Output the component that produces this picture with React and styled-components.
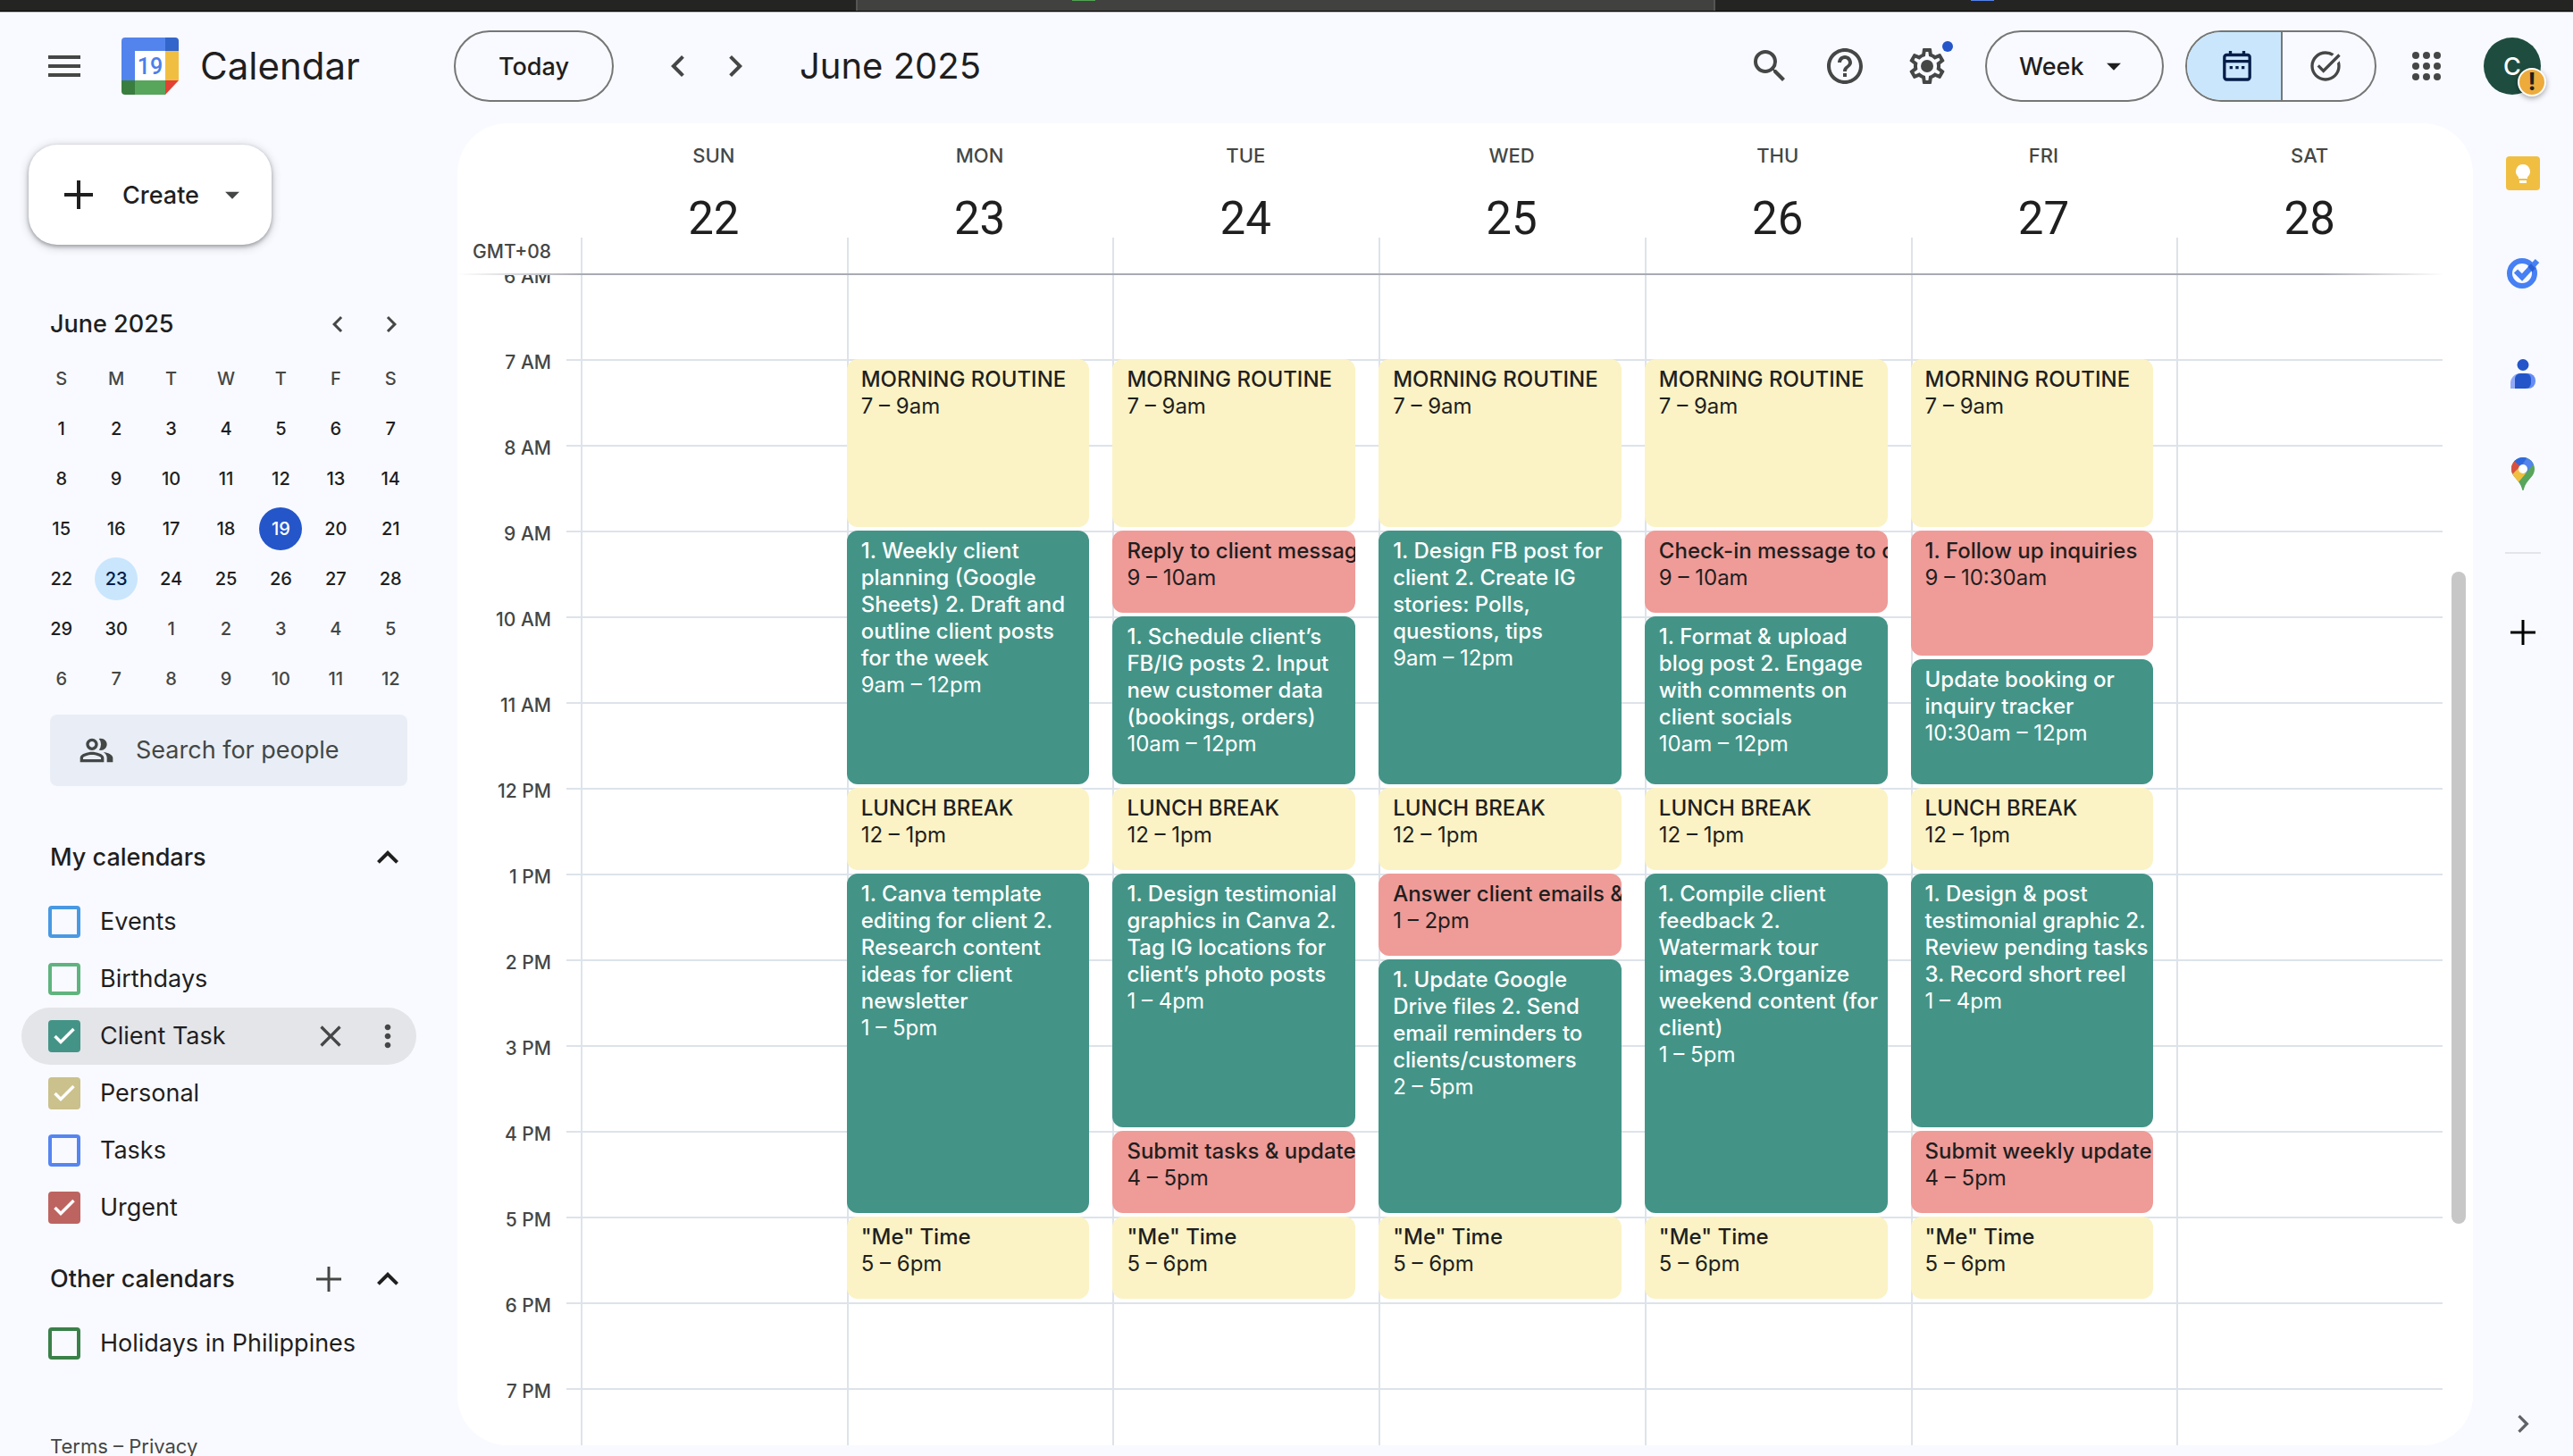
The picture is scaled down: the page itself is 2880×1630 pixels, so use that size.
import React from "react";
import styled, { createGlobalStyle } from "styled-components";
import {
  MdMenu,
  MdSearch,
  MdHelpOutline,
  MdTaskAlt,
  MdChevronLeft,
  MdChevronRight,
  MdClose,
  MdMoreVert,
  MdExpandLess,
  MdArrowDropDown,
  MdOutlinePeopleAlt,
} from "react-icons/md";

const color = {
  page: "#f9faff",
  card: "#ffffff",
  text: "#1f1f1f",
  muted: "#444746",
  outline: "#747775",
  line: "#dde3ea",
  accent: "#2456ca",
  tint: "#c9e6fd",
  tintText: "#041e49",
};

const HALF_HOUR = 48;
const FIRST_HOUR = 6;

const GlobalStyle = createGlobalStyle`
  *, *::before, *::after { box-sizing: border-box; }
  body {
    margin: 0;
    background: ${color.page};
    color: ${color.text};
    font-family: Inter, Roboto, "Liberation Sans", sans-serif;
  }
  button, input, select { font: inherit; color: inherit; margin: 0; }
  button { background: none; border: 0; padding: 0; cursor: pointer; }
  h1, h2, h3, p { margin: 0; font-weight: inherit; }
  svg { display: block; flex: none; }
`;

/* ---------- shell ---------- */

const Page = styled.div`
  height: 100vh;
  display: flex;
  flex-direction: column;
  overflow: hidden;
`;

const BrowserStrip = styled.div`
  flex: none;
  height: 14px;
  display: grid;
  grid-template-columns: 958fr 962fr 960fr;
  padding-bottom: 1px;
  background: #050505;
  border-bottom: 1px solid #b4b6ba;
`;

const BrowserTab = styled.div`
  padding-left: ${(p) => (p.$active ? "240px" : "286px")};
  background: ${(p) => (p.$active ? "#41413f" : "#242422")};
  border: solid #555553;
  border-width: ${(p) => (p.$active ? "0 2px" : "0")};
`;

const FaviconEdge = styled.div`
  width: 26px;
  height: 1px;
  background: ${(p) => p.$color};
`;

const Columns = styled.div`
  flex: 1;
  min-height: 0;
  display: grid;
  grid-template-columns: 512px minmax(0, 1fr) 112px;
`;

/* ---------- top bar ---------- */

const TopBar = styled.header`
  flex: none;
  display: flex;
  align-items: center;
  height: 124px;
  padding: 0 36px 4px 0;
`;

const Brand = styled.div`
  flex: 0 0 508px;
  display: flex;
  align-items: center;
  padding-left: 48px;
`;

const BrandLink = styled.a`
  display: flex;
  align-items: center;
  gap: 24px;
  margin-left: 40px;
  color: inherit;
  text-decoration: none;
  font-size: 42px;
  line-height: 52px;
`;

const IconButton = styled.button`
  display: flex;
  align-items: center;
  justify-content: center;
  width: ${(p) => p.$size || 48}px;
  height: ${(p) => p.$size || 48}px;
  margin-right: ${(p) => p.$after || 0}px;
  color: ${(p) => p.$color || color.muted};
`;

const TodayButton = styled.button`
  height: 80px;
  padding: 0 48px;
  border: 2px solid ${color.outline};
  border-radius: 40px;
  font-size: 27px;
  font-weight: 500;
`;

const Pager = styled.div`
  display: flex;
  margin: 0 40px;
`;

const PeriodTitle = styled.h1`
  flex: 1;
  font-size: 40px;
  line-height: 52px;
`;

const SettingsWrap = styled.div`
  position: relative;
  margin-right: 41px;
`;

const NoticeDot = styled.span`
  position: absolute;
  top: -4px;
  right: -5px;
  width: 12px;
  height: 12px;
  border-radius: 50%;
  background: ${color.accent};
`;

const ViewPicker = styled.label`
  display: grid;
  align-items: center;
  margin-right: 24px;
  > * { grid-area: 1 / 1; }
  > svg { justify-self: end; margin-right: 37px; pointer-events: none; }
`;

const ViewSelect = styled.select`
  appearance: none;
  width: 200px;
  height: 80px;
  padding: 0 36px;
  border: 2px solid ${color.outline};
  border-radius: 40px;
  background: transparent;
  font-size: 27px;
  font-weight: 500;
`;

const ModeSwitch = styled.div`
  display: flex;
  height: 80px;
  margin-right: 32px;
  border: 2px solid ${color.outline};
  border-radius: 40px;
  overflow: hidden;
`;

const ModeButton = styled.button`
  display: flex;
  align-items: center;
  justify-content: center;
  width: 105px;
  padding: ${(p) => (p.$active ? "0 0 0 6px" : "0 8px 0 0")};
  background: ${(p) => (p.$active ? color.tint : "transparent")};
  color: ${(p) => (p.$active ? color.tintText : color.muted)};
  & + & { border-left: 2px solid ${color.outline}; }
`;

const Account = styled.button`
  position: relative;
  width: 64px;
  height: 64px;
  border-radius: 50%;
  background: #1e4d40;
  color: #fff;
  font-size: 27px;
  font-weight: 500;
`;

const AccountAlert = styled.span`
  position: absolute;
  right: -6px;
  bottom: -2px;
  width: 32px;
  height: 32px;
  border: 2px solid #fff;
  border-radius: 50%;
  background: #edab3c;
  color: ${color.text};
  box-shadow: 0 2px 6px rgba(0, 0, 0, 0.35);
  font-size: 27px;
  font-weight: 700;
  line-height: 28px;
  text-align: center;
`;

/* ---------- sidebar ---------- */

const Sidebar = styled.aside`
  padding: 24px 46px 0 24px;
  overflow: hidden;
`;

const CreateButton = styled.button`
  display: flex;
  align-items: center;
  height: 112px;
  margin-left: 8px;
  padding: 0 25px 0 40px;
  border-radius: 32px;
  background: ${color.card};
  box-shadow: 0 2px 4px rgba(60, 64, 67, 0.4), 0 2px 10px 2px rgba(60, 64, 67, 0.2);
  font-size: 27px;
  font-weight: 500;
  > span { margin: 0 18px 0 33px; }
`;

const MiniCalendar = styled.section`
  margin-top: 64px;
  padding: 0 0 0 14px;
`;

const MiniHeader = styled.div`
  display: flex;
  align-items: center;
  height: 50px;
  padding-left: 18px;
`;

const MiniTitle = styled.h2`
  flex: 1;
  font-size: 27px;
  line-height: 36px;
  font-weight: 500;
`;

const MiniTable = styled.table`
  width: 430px;
  margin-top: 8px;
  table-layout: fixed;
  border-collapse: collapse;
  font-size: 20px;
  font-weight: 500;
  text-align: center;
  th, td { height: 56px; padding: 0; font-weight: 500; }
  th { color: ${color.muted}; }
`;

const MiniDay = styled.button`
  width: 48px;
  height: 48px;
  border-radius: 50%;
  background: ${(p) => (p.$today ? color.accent : p.$selected ? color.tint : "transparent")};
  color: ${(p) => (p.$today ? "#fff" : p.$selected ? color.tintText : p.$other ? color.muted : color.text)};
`;

const PeopleSearch = styled.label`
  display: flex;
  align-items: center;
  gap: 24px;
  height: 80px;
  margin: 12px 10px 0 32px;
  padding: 0 32px;
  border-radius: 8px;
  background: #e9eef6;
  color: ${color.muted};
`;

const PeopleInput = styled.input`
  flex: 1;
  min-width: 0;
  border: 0;
  padding: 0;
  outline: 0;
  background: none;
  font-size: 27px;
  line-height: 36px;
  &::placeholder { color: ${color.muted}; opacity: 1; }
`;

const ListHeader = styled.div`
  display: flex;
  align-items: center;
  height: 64px;
  margin-top: ${(p) => p.$before}px;
  margin-bottom: 8px;
  padding: 0 8px 0 32px;
`;

const ListTitle = styled.h3`
  flex: 1;
  font-size: 27px;
  line-height: 36px;
  font-weight: 500;
`;

const CalendarRow = styled.div`
  display: flex;
  align-items: center;
  height: 64px;
  padding: 0 12px 0 30px;
  border-radius: 32px;
  background: ${(p) => (p.$hovered ? "#e4e5e9" : "transparent")};
`;

const CalendarLabel = styled.label`
  flex: 1;
  display: flex;
  align-items: center;
  gap: 22px;
  font-size: 27px;
  line-height: 36px;
`;

const TickBox = styled.span`
  display: grid;
  place-items: center;
  color: #fff;
  > * { grid-area: 1 / 1; }
`;

const Tick = styled.input`
  appearance: none;
  width: 36px;
  height: 36px;
  border: 4px solid ${(p) => p.$color};
  border-radius: 4px;
  &:checked { background: ${(p) => p.$color}; }
`;

const Legal = styled.p`
  margin-top: 68px;
  padding-left: 32px;
  color: ${color.muted};
  font-size: 22px;
  line-height: 30px;
  a { color: inherit; text-decoration: none; }
`;

/* ---------- week view ---------- */

const WeekCard = styled.main`
  display: flex;
  flex-direction: column;
  margin-bottom: 12px;
  border-radius: 56px;
  background: ${color.card};
  overflow: hidden;
`;

const WeekHead = styled.div`
  flex: none;
  display: grid;
  grid-template-columns: 138px minmax(0, 1fr) 34px;
  height: 168px;
`;

const Zone = styled.div`
  align-self: end;
  padding: 0 33px 10px 0;
  color: ${color.muted};
  font-size: 21px;
  line-height: 28px;
  font-weight: 500;
  text-align: right;
`;

const SevenDays = styled.div`
  display: grid;
  grid-template-columns: repeat(7, minmax(0, 1fr));
`;

const DayHead = styled.div`
  display: grid;
  grid-template-rows: 72px 56px 40px;
  text-align: center;
  &::after {
    content: "";
    border-left: 2px solid ${color.line};
  }
`;

const DayName = styled.span`
  padding-top: 22px;
  color: ${color.muted};
  font-size: 22px;
  line-height: 28px;
  font-weight: 500;
`;

const DayNumber = styled.span`
  padding-top: 7px;
  font-family: Roboto, Inter, sans-serif;
  font-size: 51px;
  line-height: 56px;
`;

const HeadRule = styled.div`
  flex: none;
  position: relative;
  z-index: 1;
  height: 2px;
  margin: 0 32px 0 0;
  background: linear-gradient(90deg, transparent, #a9abb2 140px, #a9abb2 calc(100% - 140px), transparent);
`;

const WeekBody = styled.div`
  flex: 1;
  min-height: 0;
  display: grid;
  grid-template-columns: 138px minmax(0, 1fr) 34px;
  grid-template-rows: minmax(0, 1fr);
  overflow: hidden;
`;

const hourLines = `repeating-linear-gradient(
  transparent 0 94px,
  ${color.line} 94px 96px
)`;

const Gutter = styled.div`
  display: grid;
  grid-template-columns: minmax(0, 1fr) 16px;
`;

const HourTicks = styled.div`
  background: ${hourLines};
`;

const HourLabels = styled.div`
  margin-top: -12px;
`;

const HourLabel = styled.div`
  height: 96px;
  padding-right: 17px;
  color: ${color.muted};
  font-size: 21px;
  line-height: 28px;
  font-weight: 500;
  text-align: right;
`;

const DayColumn = styled.div`
  display: grid;
  grid-template-rows: repeat(27, ${HALF_HOUR}px);
  margin-top: -2px;
  border-left: 2px solid ${color.line};
  background: repeating-linear-gradient(${color.line} 0 2px, transparent 2px 96px);
`;

const palette = {
  personal: { background: "#fbf3c5", text: color.text },
  client: { background: "#439487", text: "#ffffff" },
  urgent: { background: "#ef9b98", text: color.text },
};

const EventCard = styled.button`
  grid-column: 1;
  grid-row: ${(p) => p.$row} / span ${(p) => p.$span};
  display: flex;
  flex-direction: column;
  justify-content: flex-start;
  min-width: 0;
  margin: 0 26px 4px -2px;
  padding: 8px 0 0 16px;
  border-radius: 12px;
  overflow: hidden;
  background: ${(p) => palette[p.$kind].background};
  color: ${(p) => palette[p.$kind].text};
  font-size: 24px;
  line-height: 30px;
  text-align: left;
`;

const EventTitle = styled.span`
  flex: none;
  font-weight: 500;
  white-space: ${(p) => (p.$oneLine ? "nowrap" : "pre-line")};
  overflow: ${(p) => (p.$oneLine ? "hidden" : "visible")};
`;

const ScrollRail = styled.div`
  display: grid;
  grid-template-rows: 332fr 730fr 248fr;
  justify-items: end;
  padding-right: 8px;
`;

const ScrollThumb = styled.div`
  grid-row: 2;
  width: 16px;
  border-radius: 8px;
  background: #c7c7c7;
`;

/* ---------- side panel ---------- */

const SidePanel = styled.nav`
  display: flex;
  flex-direction: column;
  align-items: center;
  gap: 72px;
  padding: 36px 0 16px;
`;

const PanelDivider = styled.hr`
  width: 40px;
  height: 2px;
  margin: -4px 0;
  border: 0;
  background: #e3e5ea;
`;

const PanelSpacer = styled.div`
  flex: 1;
`;

/* ---------- drawings ---------- */

const CalendarLogo = () => (
  <svg width="64" height="64" viewBox="0 0 64 64" aria-hidden="true">
    <path d="M0 4a4 4 0 0 1 4-4h45v15H15v33H0z" fill="#5383ec" />
    <path d="M49 0h11a4 4 0 0 1 4 4v11H49z" fill="#3266ca" />
    <path d="M49 15h15v33H49z" fill="#f0bf42" />
    <path d="M15 48h34v16H15z" fill="#58a55c" />
    <path d="M0 48h15v16H4a4 4 0 0 1-4-4z" fill="#397e3f" />
    <path d="M49 48h15L49 64z" fill="#e24133" />
    <path d="M15 15h34v33H15z" fill="#fff" />
    <text x="32" y="41" textAnchor="middle" fontFamily="Roboto, Inter, sans-serif" fontSize="25" fontWeight="500" fill="#4c7fe8">19</text>
  </svg>
);

const GearIcon = () => (
  <svg width="48" height="48" viewBox="0 0 24 24" fill="currentColor" aria-hidden="true">
    <path d="M19.43 12.98c.04-.32.07-.64.07-.98 0-.34-.03-.66-.07-.98l2.11-1.65c.19-.15.24-.42.12-.64l-2-3.46c-.09-.16-.26-.25-.44-.25-.06 0-.12.01-.17.03l-2.49 1c-.52-.4-1.08-.73-1.69-.98l-.38-2.65C14.46 2.18 14.25 2 14 2h-4c-.25 0-.46.18-.49.42l-.38 2.65c-.61.25-1.17.59-1.69.98l-2.49-1c-.06-.02-.12-.03-.18-.03-.17 0-.34.09-.43.25l-2 3.46c-.13.22-.07.49.12.64l2.11 1.65c-.04.32-.07.65-.07.98 0 .33.03.66.07.98l-2.11 1.65c-.19.15-.24.42-.12.64l2 3.46c.09.16.26.25.44.25.06 0 .12-.01.17-.03l2.49-1c.52.4 1.08.73 1.69.98l.38 2.65c.03.24.24.42.49.42h4c.25 0 .46-.18.49-.42l.38-2.65c.61-.25 1.17-.59 1.69-.98l2.49 1c.06.02.12.03.18.03.17 0 .34-.09.43-.25l2-3.46c.12-.22.07-.49-.12-.64l-2.11-1.65zm-1.98-1.71c.04.31.05.52.05.73 0 .21-.02.43-.05.73l-.14 1.13.89.7 1.08.84-.7 1.21-1.27-.51-1.04-.42-.9.68c-.43.32-.84.56-1.25.73l-1.06.43-.16 1.13-.2 1.35h-1.4l-.19-1.35-.16-1.13-1.06-.43c-.43-.18-.83-.41-1.23-.71l-.91-.7-1.06.43-1.27.51-.7-1.21 1.08-.84.89-.7-.14-1.13c-.03-.31-.05-.54-.05-.74s.02-.43.05-.73l.14-1.13-.89-.7-1.08-.84.7-1.21 1.27.51 1.04.42.9-.68c.43-.32.84-.56 1.25-.73l1.06-.43.16-1.13.2-1.35h1.39l.19 1.35.16 1.13 1.06.43c.43.18.83.41 1.23.71l.91.7 1.06-.43 1.27-.51.7 1.21-1.07.85-.89.7.14 1.13z" />
    <circle cx="12" cy="12" r="3.5" />
  </svg>
);

const AgendaIcon = () => (
  <svg width="40" height="40" viewBox="0 0 24 24" aria-hidden="true">
    <rect x="3.5" y="4.5" width="17" height="16.5" rx="1.5" fill="none" stroke="currentColor" strokeWidth="2" />
    <path d="M7.5 1.8v3M16.5 1.8v3M3.5 8.8h17" stroke="currentColor" strokeWidth="2" />
    <path d="M7 12h2v2H7zM11 12h2v2h-2zM15 12h2v2h-2z" fill="currentColor" />
  </svg>
);

const CheckIcon = () => (
  <svg width="24" height="20" viewBox="0 0 24 20" aria-hidden="true">
    <path d="M1.500 10l6.500 6.500L22.500 2" fill="none" stroke="currentColor" strokeWidth="3.500" />
  </svg>
);

const AppsIcon = () => (
  <svg width="48" height="48" viewBox="0 0 24 24" fill="currentColor" aria-hidden="true">
    {[6, 12, 18].map((y) => [6, 12, 18].map((x) => <circle key={`${x}-${y}`} cx={x} cy={y} r="2" />))}
  </svg>
);

const PlusIcon = ({ size, stroke }) => (
  <svg width={size} height={size} viewBox={`0 0 ${size} ${size}`} aria-hidden="true">
    <path d={`M${size / 2} 0v${size}M0 ${size / 2}h${size}`} stroke="currentColor" strokeWidth={stroke} />
  </svg>
);

const KeepIcon = () => (
  <svg width="38" height="38" viewBox="0 0 38 38" aria-hidden="true">
    <rect width="38" height="38" rx="4" fill="#f0bf42" />
    <path d="M19 9a8 8 0 0 0-5 14.2V25h10v-1.8A8 8 0 0 0 19 9z" fill="#fff" />
    <path d="M15 27h8v3h-8z" fill="#fff" />
  </svg>
);

const TasksIcon = () => (
  <svg width="38" height="36" viewBox="0 0 38 36" aria-hidden="true">
    <circle cx="18" cy="18" r="14" fill="none" stroke="#4680f4" strokeWidth="6" />
    <path d="M11 15.5l7 7L35 4" fill="none" stroke="#4680f4" strokeWidth="6" />
    <path d="M24.5 10.5L28 7l5 5.5-3.500 4z" fill="#2c62d6" />
  </svg>
);

const ContactsIcon = () => (
  <svg width="28" height="33" viewBox="0 0 28 33" aria-hidden="true">
    <circle cx="14" cy="6.5" r="6.5" fill="#2456ca" />
    <path d="M0 33v-6a11 11 0 0 1 11-11h3v17z" fill="#91aaf7" />
    <path d="M14 16h6a8 8 0 0 1 8 8v1a8 8 0 0 1-8 8h-6z" fill="#668cf6" />
    <path d="M12 16h5a6 6 0 0 1 6 6v5a6 6 0 0 1-6 6H5V22a6 6 0 0 1 6-6z" fill="#2456ca" />
  </svg>
);

const MapsIcon = () => (
  <svg width="26" height="37" viewBox="0 0 26 37" aria-hidden="true">
    <clipPath id="pin">
      <path d="M13 0C5.8 0 0 5.8 0 13c0 4 1.6 6.6 4 9.6 3.5 4.3 6.7 7.5 8 12.8.2.9.5 1.6 1 1.6s.8-.7 1-1.6c1.3-5.3 4.5-8.5 8-12.8 2.4-3 4-5.6 4-9.6C26 5.8 20.2 0 13 0z" />
    </clipPath>
    <g clipPath="url(#pin)">
      <path d="M0 0h26v37H0z" fill="#58a55c" />
      <path d="M0 20l9-11 8 8-10 12z" fill="#f0bf42" />
      <path d="M18 0h8v6L16 18l-7-7z" fill="#5383ec" />
      <path d="M0 0h18L10 11 3 5z" fill="#3069de" />
      <path d="M0 0l3 4 7 6-10 10z" fill="#d95040" />
    </g>
    <circle cx="13" cy="13" r="5" fill="#fff" />
  </svg>
);

/* ---------- data ---------- */

const weekdays = ["S", "M", "T", "W", "T", "F", "S"];

const miniWeeks = [
  [1, 2, 3, 4, 5, 6, 7],
  [8, 9, 10, 11, 12, 13, 14],
  [15, 16, 17, 18, 19, 20, 21],
  [22, 23, 24, 25, 26, 27, 28],
  [29, 30, 1, 2, 3, 4, 5],
  [6, 7, 8, 9, 10, 11, 12],
];

const myCalendars = [
  { name: "Events", color: "#4899e3" },
  { name: "Birthdays", color: "#5fb37e" },
  { name: "Client Task", color: "#439487", checked: true, hovered: true },
  { name: "Personal", color: "#cac18c", checked: true },
  { name: "Tasks", color: "#5585f0" },
  { name: "Urgent", color: "#bd6460", checked: true },
];

const otherCalendars = [{ name: "Holidays in Philippines", color: "#3a8049" }];

const morning = { start: 7, end: 9, kind: "personal", title: "MORNING ROUTINE", time: "7 – 9am" };
const lunch = { start: 12, end: 13, kind: "personal", title: "LUNCH BREAK", time: "12 – 1pm" };
const meTime = { start: 17, end: 18, kind: "personal", title: '"Me" Time', time: "5 – 6pm" };

const days = [
  { name: "SUN", date: 22, events: [] },
  {
    name: "MON",
    date: 23,
    events: [
      morning,
      { start: 9, end: 12, kind: "client", title: "1. Weekly client\nplanning (Google\nSheets) 2. Draft and\noutline client posts\nfor the week", time: "9am – 12pm" },
      lunch,
      { start: 13, end: 17, kind: "client", title: "1. Canva template\nediting for client 2.\nResearch content\nideas for client\nnewsletter", time: "1 – 5pm" },
      meTime,
    ],
  },
  {
    name: "TUE",
    date: 24,
    events: [
      morning,
      { start: 9, end: 10, kind: "urgent", title: "Reply to client messag", time: "9 – 10am" },
      { start: 10, end: 12, kind: "client", title: "1. Schedule client’s\nFB/IG posts 2. Input\nnew customer data\n(bookings, orders)", time: "10am – 12pm" },
      lunch,
      { start: 13, end: 16, kind: "client", title: "1. Design testimonial\ngraphics in Canva 2.\nTag IG locations for\nclient’s photo posts", time: "1 – 4pm" },
      { start: 16, end: 17, kind: "urgent", title: "Submit tasks & update", time: "4 – 5pm" },
      meTime,
    ],
  },
  {
    name: "WED",
    date: 25,
    events: [
      morning,
      { start: 9, end: 12, kind: "client", title: "1. Design FB post for\nclient 2. Create IG\nstories: Polls,\nquestions, tips", time: "9am – 12pm" },
      lunch,
      { start: 13, end: 14, kind: "urgent", title: "Answer client emails &", time: "1 – 2pm" },
      { start: 14, end: 17, kind: "client", title: "1. Update Google\nDrive files 2. Send\nemail reminders to\nclients/customers", time: "2 – 5pm" },
      meTime,
    ],
  },
  {
    name: "THU",
    date: 26,
    events: [
      morning,
      { start: 9, end: 10, kind: "urgent", title: "Check-in message to c", time: "9 – 10am" },
      { start: 10, end: 12, kind: "client", title: "1. Format & upload\nblog post 2. Engage\nwith comments on\nclient socials", time: "10am – 12pm" },
      lunch,
      { start: 13, end: 17, kind: "client", title: "1. Compile client\nfeedback 2.\nWatermark tour\nimages 3.Organize\nweekend content (for\nclient)", time: "1 – 5pm" },
      meTime,
    ],
  },
  {
    name: "FRI",
    date: 27,
    events: [
      morning,
      { start: 9, end: 10.5, kind: "urgent", title: "1. Follow up inquiries", time: "9 – 10:30am" },
      { start: 10.5, end: 12, kind: "client", title: "Update booking or\ninquiry tracker", time: "10:30am – 12pm" },
      lunch,
      { start: 13, end: 16, kind: "client", title: "1. Design & post\ntestimonial graphic 2.\nReview pending tasks\n3. Record short reel", time: "1 – 4pm" },
      { start: 16, end: 17, kind: "urgent", title: "Submit weekly update", time: "4 – 5pm" },
      meTime,
    ],
  },
  { name: "SAT", date: 28, events: [] },
];

const hours = ["6 AM", "7 AM", "8 AM", "9 AM", "10 AM", "11 AM", "12 PM", "1 PM", "2 PM", "3 PM", "4 PM", "5 PM", "6 PM", "7 PM"];

/* ---------- composed parts ---------- */

const CalendarItem = ({ item }) => (
  <CalendarRow $hovered={item.hovered}>
    <CalendarLabel>
      <TickBox>
        <Tick type="checkbox" defaultChecked={item.checked} $color={item.color} />
        {item.checked && <CheckIcon />}
      </TickBox>
      {item.name}
    </CalendarLabel>
    {item.hovered && (
      <>
        <IconButton $size={40} $after={24} aria-label={`Remove ${item.name}`}>
          <MdClose size={40} />
        </IconButton>
        <IconButton $size={40} aria-label={`Options for ${item.name}`}>
          <MdMoreVert size={40} />
        </IconButton>
      </>
    )}
  </CalendarRow>
);

const Event = ({ event }) => (
  <EventCard
    $kind={event.kind}
    $row={(event.start - FIRST_HOUR) * 2 + 1}
    $span={(event.end - event.start) * 2}
  >
    <EventTitle $oneLine={event.kind === "urgent"}>{event.title}</EventTitle>
    <span>{event.time}</span>
  </EventCard>
);

export default function App() {
  return (
    <Page>
      <GlobalStyle />
      <BrowserStrip>
        <BrowserTab />
        <BrowserTab $active><FaviconEdge $color="#4fa453" /></BrowserTab>
        <BrowserTab><FaviconEdge $color="#5383ec" /></BrowserTab>
      </BrowserStrip>

      <TopBar>
        <Brand>
          <IconButton aria-label="Main menu"><MdMenu size={48} /></IconButton>
          <BrandLink href="#">
            <CalendarLogo />
            Calendar
          </BrandLink>
        </Brand>
        <TodayButton>Today</TodayButton>
        <Pager>
          <IconButton $size={64} aria-label="Previous week"><MdChevronLeft size={48} /></IconButton>
          <IconButton $size={64} aria-label="Next week"><MdChevronRight size={48} /></IconButton>
        </Pager>
        <PeriodTitle>June 2025</PeriodTitle>
        <IconButton $after={36} aria-label="Search"><MdSearch size={48} /></IconButton>
        <IconButton $after={44} aria-label="Support"><MdHelpOutline size={48} /></IconButton>
        <SettingsWrap>
          <IconButton aria-label="Settings"><GearIcon /></IconButton>
          <NoticeDot />
        </SettingsWrap>
        <ViewPicker>
          <ViewSelect defaultValue="Week" aria-label="View">
            <option>Week</option>
          </ViewSelect>
          <MdArrowDropDown size={38} />
        </ViewPicker>
        <ModeSwitch>
          <ModeButton $active aria-label="Calendar view"><AgendaIcon /></ModeButton>
          <ModeButton aria-label="Tasks view"><MdTaskAlt size={40} /></ModeButton>
        </ModeSwitch>
        <IconButton $after={40} aria-label="Apps"><AppsIcon /></IconButton>
        <Account aria-label="Account">
          C<AccountAlert>!</AccountAlert>
        </Account>
      </TopBar>

      <Columns>
        <Sidebar>
          <CreateButton>
            <PlusIcon size={32} stroke={4} />
            <span>Create</span>
            <MdArrowDropDown size={38} color={color.muted} />
          </CreateButton>

          <MiniCalendar>
            <MiniHeader>
              <MiniTitle>June 2025</MiniTitle>
              <IconButton $size={36} $after={24} aria-label="Previous month"><MdChevronLeft size={36} /></IconButton>
              <IconButton $size={36} $after={10} aria-label="Next month"><MdChevronRight size={36} /></IconButton>
            </MiniHeader>
            <MiniTable>
              <thead>
                <tr>{weekdays.map((d, i) => <th key={i}>{d}</th>)}</tr>
              </thead>
              <tbody>
                {miniWeeks.map((week, w) => (
                  <tr key={w}>
                    {week.map((d) => (
                      <td key={d}>
                        <MiniDay $today={w === 2 && d === 19} $selected={w === 3 && d === 23} $other={w > 3 && d < 20}>
                          {d}
                        </MiniDay>
                      </td>
                    ))}
                  </tr>
                ))}
              </tbody>
            </MiniTable>
          </MiniCalendar>

          <PeopleSearch>
            <MdOutlinePeopleAlt size={40} />
            <PeopleInput placeholder="Search for people" aria-label="Search for people" />
          </PeopleSearch>

          <ListHeader $before={48}>
            <ListTitle>My calendars</ListTitle>
            <IconButton $color={color.text} aria-label="Collapse my calendars"><MdExpandLess size={48} /></IconButton>
          </ListHeader>
          {myCalendars.map((item) => <CalendarItem key={item.name} item={item} />)}

          <ListHeader $before={16}>
            <ListTitle>Other calendars</ListTitle>
            <IconButton $after={18} aria-label="Add other calendars"><PlusIcon size={28} stroke={3} /></IconButton>
            <IconButton $color={color.text} aria-label="Collapse other calendars"><MdExpandLess size={48} /></IconButton>
          </ListHeader>
          {otherCalendars.map((item) => <CalendarItem key={item.name} item={item} />)}

          <Legal>
            <a href="#">Terms</a> – <a href="#">Privacy</a>
          </Legal>
        </Sidebar>

        <WeekCard>
          <WeekHead>
            <Zone>GMT+08</Zone>
            <SevenDays>
              {days.map((day) => (
                <DayHead key={day.name}>
                  <DayName>{day.name}</DayName>
                  <DayNumber>{day.date}</DayNumber>
                </DayHead>
              ))}
            </SevenDays>
          </WeekHead>
          <HeadRule />
          <WeekBody>
            <Gutter>
              <HourLabels>
                {hours.map((h) => <HourLabel key={h}>{h}</HourLabel>)}
              </HourLabels>
              <HourTicks />
            </Gutter>
            <SevenDays>
              {days.map((day) => (
                <DayColumn key={day.name}>
                  {day.events.map((event) => <Event key={event.title} event={event} />)}
                </DayColumn>
              ))}
            </SevenDays>
            <ScrollRail>
              <ScrollThumb />
            </ScrollRail>
          </WeekBody>
        </WeekCard>

        <SidePanel aria-label="Side panel">
          <IconButton $size={40} aria-label="Keep"><KeepIcon /></IconButton>
          <IconButton $size={40} aria-label="Tasks"><TasksIcon /></IconButton>
          <IconButton $size={40} aria-label="Contacts"><ContactsIcon /></IconButton>
          <IconButton $size={40} aria-label="Maps"><MapsIcon /></IconButton>
          <PanelDivider />
          <IconButton $size={40} $color="#000" aria-label="Get add-ons"><PlusIcon size={28} stroke={3} /></IconButton>
          <PanelSpacer />
          <IconButton $size={40} $color="#5f6368" aria-label="Hide side panel"><MdChevronRight size={40} /></IconButton>
        </SidePanel>
      </Columns>
    </Page>
  );
}
